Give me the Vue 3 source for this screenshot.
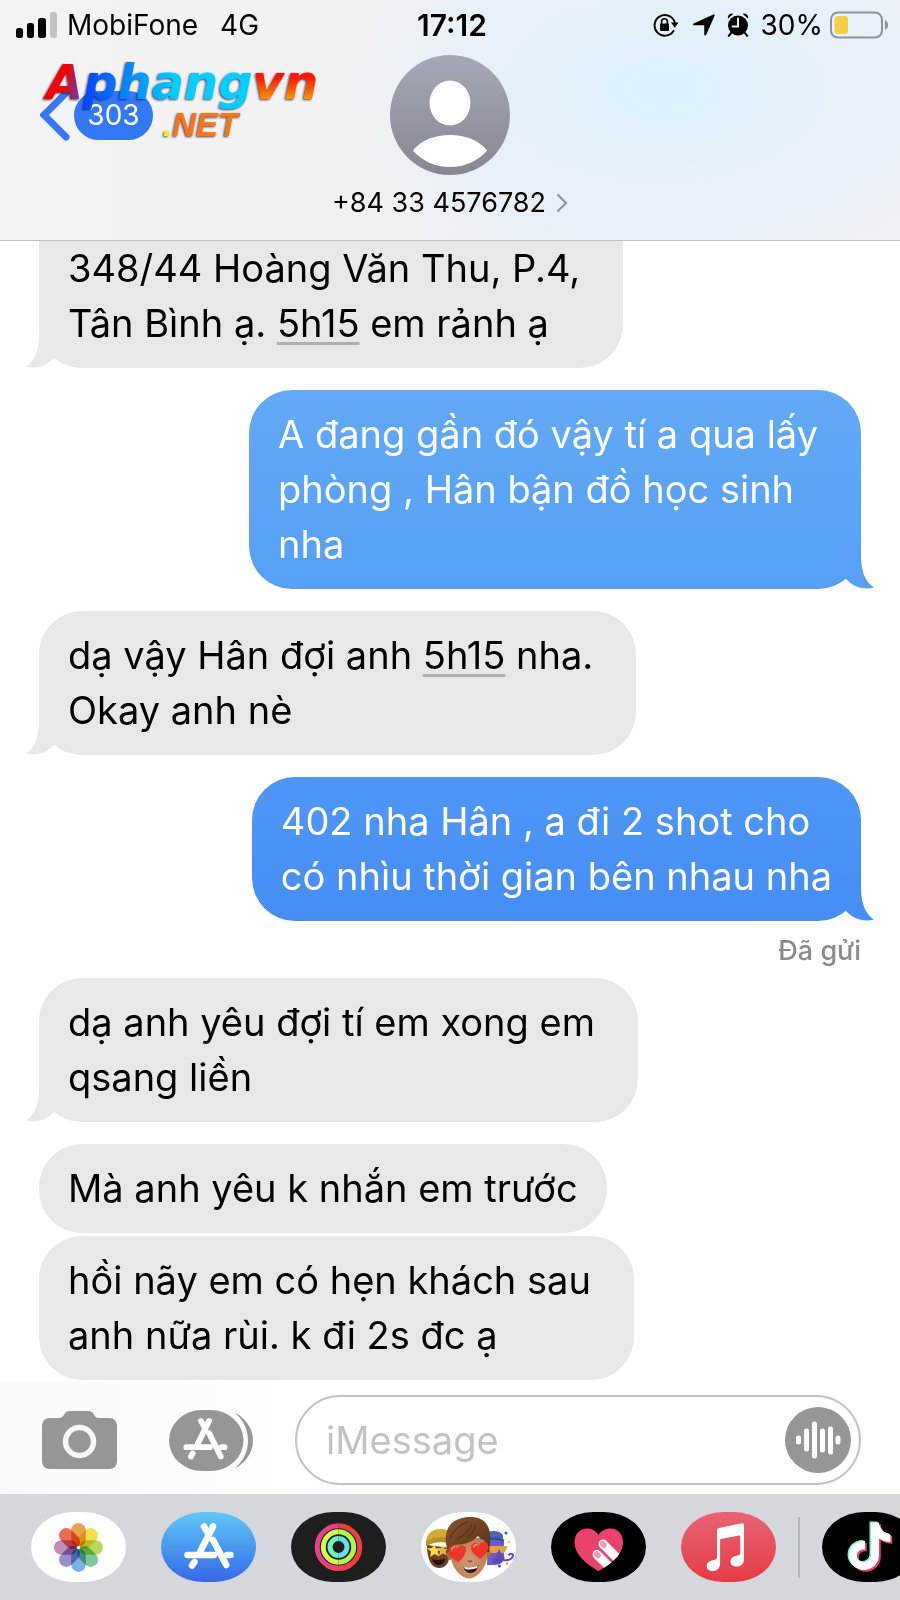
<template>
  <div class="chat-screen">
    <header class="header">
      <div class="status-bar">
        <div class="status-left">
          <svg class="signal" viewBox="0 0 42 26" aria-hidden="true">
            <rect x="0" y="16" width="7" height="10" rx="2.5" />
            <rect x="11" y="11" width="7" height="15" rx="2.5" />
            <rect x="22" y="6" width="8" height="20" rx="2.5" />
            <rect x="34" y="0" width="7" height="26" rx="2.5" fill="#c2c3c4" />
          </svg>
          <span>MobiFone</span>
          <span class="network">4G</span>
        </div>
        <div class="clock">17:12</div>
        <div class="status-right">
          <svg class="lock" viewBox="0 0 26 24" aria-hidden="true">
            <path d="M20.5 18A10.3 10.3 0 1 1 21.6 9" fill="none" stroke="#000" stroke-width="2" stroke-linecap="round" />
            <path d="M18 9.5h7.5l-3.7 5.3z" />
            <rect x="7" y="10.5" width="9" height="7.5" rx="1" />
            <path d="M8.6 11V8.600a2.900 2.900 0 0 1 5.800 0V11" fill="none" stroke="#000" stroke-width="1.600" />
          </svg>
          <svg class="arrow" viewBox="0 0 22 22" aria-hidden="true">
            <path d="M.7 9.600 20.300.4c1-.4 1.700.3 1.300 1.300L13.200 20.800c-.5 1.200-1.900 1-1.900-.3l-.1-9.200-9.900-.1C-.1 11.200-.3 10.100.7 9.600z" />
          </svg>
          <svg class="alarm" viewBox="0 0 22 24" aria-hidden="true">
            <circle cx="11" cy="12.500" r="10" />
            <path d="M1 5.500A4 4 0 0 1 6.500.8zM21 5.500A4 4 0 0 0 15.500.8z" />
            <path d="M4.500 19.500 1.800 22.800M17.500 19.500l2.700 3.300" stroke="#000" stroke-width="2" stroke-linecap="round" />
            <path d="M11 5.500v8H5.500" fill="none" stroke="#eaf3fa" stroke-width="2" stroke-linecap="round" />
          </svg>
          <span class="percent">30%</span>
          <svg class="battery" viewBox="0 0 58 28" aria-hidden="true">
            <rect x="1" y="1.500" width="51" height="25" rx="7" fill="none" stroke="#8d9398" stroke-width="2" />
            <rect x="4.500" y="5" width="13.500" height="18" rx="3.500" fill="#f7cd46" />
            <path d="M55 9c4 2 4 8 0 10z" fill="#8d9398" />
          </svg>
        </div>
      </div>

      <div class="nav">
        <button class="back" type="button" aria-label="Quay lại">
          <svg class="back-arrow" viewBox="0 0 30 52" aria-hidden="true">
            <path d="M26 4 4 26l22 22" fill="none" stroke="#3478f6" stroke-width="7" stroke-linecap="round" />
          </svg>
          <span class="unread">303</span>
        </button>
        <button class="contact" type="button">
          <svg class="avatar" viewBox="0 0 120 120" aria-hidden="true">
            <defs>
              <linearGradient id="avatarFill" x1="0" y1="0" x2="0" y2="1">
                <stop offset="0" stop-color="#a5a9b7" />
                <stop offset="1" stop-color="#858892" />
              </linearGradient>
            </defs>
            <circle cx="60" cy="60" r="60" fill="url(#avatarFill)" />
            <ellipse cx="60" cy="48" rx="20.500" ry="22.500" fill="#fff" />
            <path d="M23 95.500C31 85 45 80 60 80s29 5 37 15.500C88 106 75 112 60 112s-28-6-37-16.500z" fill="#fff" />
          </svg>
          <span class="phone">
            +84 33 4576782
            <svg class="chevron" viewBox="0 0 12 20" aria-hidden="true">
              <path d="m1.500 1.500 8.500 8.500-8.500 8.500" fill="none" stroke="#8e9298" stroke-width="2" />
            </svg>
          </span>
        </button>
      </div>

      <svg class="watermark" viewBox="0 -10 300 100" role="img" aria-label="Aphangvn .NET">
        <defs>
          <linearGradient id="wmA" gradientUnits="userSpaceOnUse" x1="10" y1="0" x2="48" y2="6">
            <stop offset="0.600" stop-color="#f80000" />
            <stop offset="1" stop-color="#6b3aa0" />
          </linearGradient>
          <linearGradient id="wmPhang" gradientUnits="userSpaceOnUse" x1="44" y1="0" x2="140" y2="0">
            <stop offset="0" stop-color="#0a3cff" />
            <stop offset="1" stop-color="#00cfff" />
          </linearGradient>
          <linearGradient id="wmVn" gradientUnits="userSpaceOnUse" x1="0" y1="14" x2="0" y2="41">
            <stop offset="0.200" stop-color="#ff1500" />
            <stop offset="1" stop-color="#ff9500" />
          </linearGradient>
        </defs>
        <text class="wm-main" x="11" y="41"><tspan fill="url(#wmA)">A</tspan><tspan fill="url(#wmPhang)">phang</tspan><tspan fill="url(#wmVn)">vn</tspan></text>
        <text class="wm-net" x="128" y="78"><tspan fill="#ffee00">.</tspan><tspan fill="#ff7410">NET</tspan></text>
      </svg>
    </header>

    <main class="messages">
      <template v-for="msg in messages" :key="msg.id">
        <div
          class="bubble"
          :class="[msg.from, msg.tone, { loose: msg.loose, close: msg.close }]"
        >
          <svg v-if="msg.tail" class="tail" viewBox="0 0 42 46" aria-hidden="true">
            <path d="M13 0v12c0 16-4 27-13 32.500 11 3 21-1 28-8.500L40 24 30 0z" fill="currentColor" />
          </svg>
          <p class="text">
            <template v-for="(part, i) in msg.parts" :key="i">
              <a v-if="part.time" href="#">{{ part.time }}</a>
              <template v-else>{{ part }}</template>
            </template>
          </p>
        </div>
        <div v-if="msg.status" class="delivery">{{ msg.status }}</div>
      </template>
    </main>

    <form class="composer" @submit.prevent>
      <button class="icon-button camera" type="button" aria-label="Máy ảnh">
        <svg viewBox="0 0 75 58" aria-hidden="true">
          <path d="M8 7h9c3 0 4-1.500 5.500-4C24 .7 25.500 0 28 0h18c2.500 0 4 .7 5.500 3 1.500 2.500 2.500 4 5.500 4h10c5 0 8 3 8 8v35c0 5-3 8-8 8H8c-5 0-8-3-8-8V15c0-5 3-8 8-8z" fill="#969696" />
          <circle cx="37.500" cy="30.500" r="14" fill="none" stroke="#f8f8f8" stroke-width="5.500" />
        </svg>
      </button>
      <button class="icon-button apps" type="button" aria-label="Ứng dụng">
        <svg viewBox="0 0 84 61" aria-hidden="true">
          <rect width="74.500" height="61" rx="33" ry="30.500" fill="#969696" />
          <path d="M66 2.500C76 8 84 18 84 30.500S76 53 66 58.500C74 51 79 42 79 30.500S74 10 66 2.500z" fill="#969696" />
          <g transform="translate(-6.300 -1.100) scale(.89)" fill="none" stroke="#fff" stroke-width="6.500" stroke-linecap="round">
            <path d="M52 13.500 39 40M43 13.500l4 7M52 27l13.300 26.500M66 43h3.500M33.700 50l-2 3.500" />
            <path d="M26.500 43H53" />
          </g>
        </svg>
      </button>
      <div class="field">
        <input v-model="draft" type="text" placeholder="iMessage" aria-label="iMessage" />
        <button class="voice" type="button" aria-label="Ghi âm">
          <svg viewBox="0 0 66 66" aria-hidden="true">
            <path
              d="M13.500 31v4M21.500 24v18M29.500 17v32M37.500 24v19M45.500 22v23M53 31v4"
              fill="none"
              stroke="#fff"
              stroke-width="5"
              stroke-linecap="round"
            />
          </svg>
        </button>
      </div>
    </form>

    <nav class="tray">
      <button class="app photos" type="button" aria-label="Ảnh">
        <svg viewBox="0 0 95 70" aria-hidden="true">
          <rect
            v-for="petal in petals"
            :key="petal.angle"
            class="petal"
            x="40.200"
            y="11"
            width="14.600"
            height="23.500"
            rx="7.300"
            :fill="petal.color"
            :transform="`rotate(${petal.angle} 47.5 35.500)`"
          />
          <circle cx="47.500" cy="35.500" r="1.500" fill="#fff" />
        </svg>
      </button>

      <button class="app store" type="button" aria-label="App Store">
        <svg viewBox="0 0 95 70" aria-hidden="true">
          <g fill="none" stroke="#fff" stroke-width="6.500" stroke-linecap="round">
            <path d="M52 14.500 39 40M43 14.500l4 7M52 28l13.300 25M66 43h3.500M33.500 50l-2.500 3.500" />
            <path d="M26.500 43H53" />
          </g>
        </svg>
      </button>

      <button class="app activity" type="button" aria-label="Hoạt động">
        <svg viewBox="0 0 95 70" aria-hidden="true">
          <g fill="none" stroke-width="5">
            <path d="M47.500 13.700a21.300 21.300 0 0 0 0 42.600" stroke="#ea3f8f" />
            <path d="M47.500 13.700a21.300 21.300 0 0 1 0 42.600" stroke="#ee4036" />
            <path d="M47.500 56.300a21.300 21.300 0 0 1-12-3.500" stroke="#f03f6a" />
            <path d="M47.500 56.300a21.300 21.300 0 0 0 12-3.500" stroke="#f03f50" />
            <path d="M47.500 19.800a15.200 15.200 0 0 0 0 30.400" stroke="#d3f94d" />
            <path d="M47.500 19.800a15.200 15.200 0 0 1 0 30.400" stroke="#a9fa4f" />
            <path d="M47.500 26.500a8.500 8.500 0 0 0 0 17" stroke="#6df5bd" />
            <path d="M47.500 26.500a8.500 8.500 0 0 1 0 17" stroke="#67dff3" />
          </g>
        </svg>
      </button>

      <button class="app memoji" type="button" aria-label="Memoji">
        <svg viewBox="0 0 95 70" aria-hidden="true">
          <defs>
            <linearGradient id="hairFill" x1="0" y1="0" x2="1" y2="1">
              <stop offset="0" stop-color="#8a552e" />
              <stop offset="1" stop-color="#573015" />
            </linearGradient>
            <radialGradient id="skinFill" cx="0.500" cy="0.550" r="0.600">
              <stop offset="0" stop-color="#d49c72" />
              <stop offset="1" stop-color="#b57c54" />
            </radialGradient>
          </defs>
          <path d="M6 33c0 14 4 23 12 23s11-6 11-20z" fill="#6b3f23" />
          <path d="M5 33C4 21 12 16 22 17c6 1 8 4 8 14-8-2-17-2-25 2z" fill="#d2ab32" />
          <path d="M5 29c7-4 16-5 25-2v5c-9-3-17-2-25 2z" fill="#b8922a" />
          <path d="m13 32 2 4.500 5-.5-3.500 3.500 2 5-5-2.500-4.500 3 1-5.500-4-3 5-.5z" fill="#ffd94a" />
          <path d="m22 33 1.500 4 4-.5-3 3 1.500 4-4-2-4 2.500 1-4.500-3-3 4-.3z" fill="#e6b93c" />
          <path d="M11 47c5 1.500 9 1 13-.5-.5 4-3 6.500-6 6.500s-6-2-7-6z" fill="#2a120c" />
          <path d="M67 27h16v18c0 5-4 8-9 8h-8z" fill="#7158c8" />
          <path d="M67 20c6-2 12-1 15 3v6c-5-2-10-2-15-1z" fill="#3b68c0" />
          <path d="M68 27c6-1 11 0 14 2" stroke="#294c98" stroke-width="2" fill="none" />
          <path d="M67 34h19c0 5-3 8-6 7l-2-2-3 2h-8z" fill="#e2a33a" />
          <path d="m78 37 3 6 3 3-4 5-6 1-4-3 5-4z" fill="#6246b8" />
          <path d="M81 48c6 1 10-1 11-4 .5-2.500-3.500-3-4-.5" fill="none" stroke="#6246b8" stroke-width="2" />
          <circle cx="75.500" cy="23" r="1.200" fill="#e33b3b" />
          <circle cx="85" cy="21" r="1.500" fill="#2c59d8" />
          <circle cx="88" cy="30" r="1.500" fill="#f3e23a" />
          <circle cx="78.500" cy="54" r="1.500" fill="#2c59d8" />
          <circle cx="86" cy="51.500" r="1.300" fill="#f09a2a" />
          <ellipse cx="29" cy="43" rx="3" ry="5" fill="#a76d45" />
          <ellipse cx="66.500" cy="42" rx="3" ry="5" fill="#a76d45" />
          <path d="M30 26h36v18c0 11-10 22.500-18 22.500S30 55 30 44z" fill="url(#skinFill)" />
          <path d="M27 40C22 25 25 11 38 7c11-4 24-2 28 6 5 7 3 18 2 27h-2c0-5-1-9-3-12-3-1-5-2-6-4-5 6-15 9-24 9-3 2-4 4-4 7z" fill="url(#hairFill)" />
          <path d="M29 26c4-8 10-14 18-16M36 27c7-3 12-9 15-15M46 25c5-2 8-8 9-13" stroke="#4f2b13" stroke-width="1" fill="none" />
          <path d="M37.500 50.500C32 47 27 43.500 27.500 38c.5-5 7-6 8.500-1 2-5 9-5 9 .500 0 5-4 9-7.500 13z" fill="#ee3528" />
          <path d="M59.500 47C55 44 50 40.500 50 35.500c0-5 6-6.500 8-2 2-5 9-4.500 9.500.500.500 5-4 9-8 13z" fill="#ee3528" />
          <path d="M30.500 38c0-2 1.500-3 3-2.500M53 35c0-2 1.500-2.500 3-2" stroke="#ff8d7c" stroke-width="1.500" fill="none" stroke-linecap="round" />
          <path d="M47 48.500c1 1.500 3 1.500 4 0" stroke="#87502f" stroke-width="1.500" fill="none" />
          <path d="M42.500 55c6 1 11 0 15-2-1 5-4 8-8 8-3 0-6-2-7-6z" fill="#401311" />
          <path d="M43 55c6 1 10 0 14-1.500l-1 2.500c-4 1.500-8 2-12 1z" fill="#fff" />
        </svg>
      </button>

      <button class="app touch" type="button" aria-label="Digital Touch">
        <svg viewBox="0 0 95 70" aria-hidden="true">
          <defs>
            <clipPath id="heartClip">
              <path d="M47.500 59C35 52 23.500 42.500 23.500 30c0-8 5.500-13.500 12.500-13.500 5 0 9 2.500 11.500 6.500 2.500-4 6.500-6.500 12-6.500C66.500 16.500 72 22 72 30c0 12.500-11.500 22-24.500 29z" />
            </clipPath>
          </defs>
          <g clip-path="url(#heartClip)">
            <rect width="95" height="70" fill="#ea426b" />
            <path d="m52 32 20 20M46 42.500l20 20" stroke="#fff" stroke-width="9" stroke-linecap="round" />
            <path d="m51.500 31.500 1.500 1.500M45.500 42l1.500 1.500" stroke="#f29ab0" stroke-width="5.500" stroke-linecap="round" />
          </g>
        </svg>
      </button>

      <button class="app music" type="button" aria-label="Nhạc">
        <svg viewBox="0 0 95 70" aria-hidden="true">
          <path
            d="M36 18.500c0-1.500.7-2.300 2-2.600l23-4.600c1.300-.3 2 .3 2 1.700v34c0 5-3 7.500-7.500 7.500-3.500 0-6-2-6-5s2-5 6-5.800c3-.6 3.800-1 3.800-3V24.300c0-.8-.5-1-1.200-.9l-18 3.700c-.7.200-1 .5-1 1.200V51c0 5.500-3 8-7.500 8-3.500 0-6-2-6-5s2.200-5 6-5.800c3-.6 4.400-1 4.400-3.200z"
            fill="#fff"
          />
        </svg>
      </button>

      <div class="divider"></div>

      <button class="app tiktok" type="button" aria-label="TikTok">
        <svg viewBox="0 0 95 70" aria-hidden="true">
          <defs>
            <path id="tiktokNote" d="M49 10.500h8c.5 6 5 11 11.500 12v7.500c-4.500 0-8.300-1.300-11.500-3.800V43c0 8.500-7 15-15 15s-15-6.500-15-14.500S34 28.500 43 29v8.500c-4.500-.7-8 2-8 6s3.200 6.500 7 6.500 7-3 7-7z" />
          </defs>
          <use href="#tiktokNote" x="-1.500" y="-1" fill="#74f0ec" />
          <use href="#tiktokNote" x="1.800" y="1.800" fill="#ea3f5c" />
          <use href="#tiktokNote" fill="#fff" />
        </svg>
      </button>
    </nav>
  </div>
</template>

<script setup>
import { ref } from 'vue'

const draft = ref('')

const messages = [
  {
    id: 1,
    from: 'them',
    tail: true,
    loose: true,
    parts: ['348/44 Hoàng Văn Thu, P.4,\nTân Bình ạ. ', { time: '5h15' }, ' em rảnh ạ']
  },
  {
    id: 2,
    from: 'me',
    tone: 'light',
    tail: true,
    loose: true,
    parts: ['A đang gần đó vậy tí a qua lấy\nphòng , Hân bận đồ học sinh\nnha']
  },
  {
    id: 3,
    from: 'them',
    tail: true,
    loose: true,
    parts: ['dạ vậy Hân đợi anh ', { time: '5h15' }, ' nha.\nOkay anh nè']
  },
  {
    id: 4,
    from: 'me',
    tone: 'deep',
    tail: true,
    parts: ['402 nha Hân , a đi 2 shot cho\ncó nhìu thời gian bên nhau nha'],
    status: 'Đã gửi'
  },
  {
    id: 5,
    from: 'them',
    tail: true,
    loose: true,
    parts: ['dạ anh yêu đợi tí em xong em\nqsang liền']
  },
  { id: 6, from: 'them', parts: ['Mà anh yêu k nhắn em trước'] },
  {
    id: 7,
    from: 'them',
    loose: true,
    close: true,
    parts: ['hồi nãy em có hẹn khách sau\nanh nữa rùi. k đi 2s đc ạ']
  }
]

const petals = [
  { angle: 0, color: '#f0a04b' },
  { angle: 45, color: '#f3e04a' },
  { angle: 90, color: '#bcd75f' },
  { angle: 135, color: '#7fc795' },
  { angle: 180, color: '#78b4e2' },
  { angle: 225, color: '#9d8fc9' },
  { angle: 270, color: '#c58bb8' },
  { angle: 315, color: '#ea6a5c' }
]
</script>

<style>
body {
  margin: 0;
  background: #fff;
}
</style>

<style scoped>
.chat-screen {
  min-height: 100vh;
  display: flex;
  flex-direction: column;
  overflow: hidden;
  background: #fff;
  color: #000;
  font-family: Inter, "Liberation Sans", sans-serif;
}

button {
  padding: 0;
  border: none;
  background: none;
  color: inherit;
  font: inherit;
  cursor: pointer;
}

svg {
  display: block;
}

/* header */
.header {
  position: relative;
  z-index: 1;
  height: 240px;
  border-bottom: 1px solid #bfc0c2;
  background:
    radial-gradient(ellipse 340px 190px at 74% 90px, #def0fc 0%, rgba(228, 241, 251, 0.8) 50%, rgba(238, 241, 245, 0) 100%),
    linear-gradient(90deg, #f3f3f3 0%, #f2f2f3 40%, #eaf0f5 60%, #eef1f5 100%);
}

.status-bar {
  height: 50px;
  padding: 0 12px 0 16px;
  display: grid;
  grid-template-columns: 1fr auto 1fr;
  align-items: center;
  font-size: 28px;
}

.status-left,
.status-right {
  display: flex;
  align-items: center;
}

.status-right {
  justify-content: flex-end;
}

.signal {
  width: 42px;
  height: 26px;
  margin-right: 9px;
}

.network {
  margin-left: 22px;
}

.clock {
  font-size: 30px;
  font-weight: 600;
}

.lock {
  width: 26px;
  height: 24px;
  margin-right: 14px;
}

.arrow {
  width: 22px;
  height: 22px;
  margin-right: 12px;
}

.alarm {
  width: 22px;
  height: 24px;
  margin-right: 12px;
}

.battery {
  width: 58px;
  height: 28px;
  margin-left: 7px;
}

.nav {
  padding: 5px 40px 0;
  display: grid;
  grid-template-columns: 1fr auto 1fr;
  align-items: start;
}

.back {
  margin-top: 34px;
  display: flex;
  align-items: center;
  gap: 4px;
}

.back-arrow {
  width: 30px;
  height: 52px;
}

.unread {
  width: 79px;
  line-height: 49px;
  border-radius: 25px;
  background: #3478f6;
  color: #fff;
  font-size: 28px;
}

.contact {
  display: flex;
  flex-direction: column;
  align-items: center;
}

.avatar {
  width: 120px;
  height: 120px;
}

.phone {
  margin-top: 12px;
  display: flex;
  align-items: center;
  gap: 10px;
  font-size: 27px;
  line-height: 32px;
}

.chevron {
  width: 12px;
  height: 20px;
}

.watermark {
  position: absolute;
  left: 35px;
  top: 48px;
  width: 300px;
  height: 100px;
  pointer-events: none;
  filter: drop-shadow(-1px 1px 1px rgba(20, 20, 60, 0.8));
}

.wm-main {
  font: italic bold 48px "DejaVu Sans", sans-serif;
}

.wm-net {
  font: italic bold 33px "Liberation Sans", sans-serif;
}

/* conversation */
.messages {
  flex: 1;
  padding: 0 39px;
  display: flex;
  flex-direction: column;
  align-items: flex-start;
}

.bubble {
  position: relative;
  margin-top: 22px;
  padding: 17px 29px;
  border-radius: 43px;
  font-size: 38px;
  line-height: 55px;
}

/* scrolled partly under the header */
.bubble:first-child {
  margin-top: -17px;
  border-top-left-radius: 0;
  border-top-right-radius: 0;
}

.bubble.loose {
  padding-right: 43px;
}

.bubble.close {
  margin-top: 3px;
}

.them {
  background: #e8e8e8;
}

.me {
  align-self: flex-end;
  color: #fff;
}

.light {
  background: linear-gradient(#62aaf6, #559ff5);
}

.deep {
  background: linear-gradient(#4f97f6, #468df5);
}

.tail {
  position: absolute;
  left: -13px;
  bottom: 0;
  width: 42px;
  height: 46px;
  color: #e8e8e8;
}

.me .tail {
  left: auto;
  right: -13px;
  transform: scaleX(-1);
}

.light .tail {
  color: #57a0f5;
}

.deep .tail {
  color: #488ff5;
}

.text {
  position: relative;
  margin: 0;
  white-space: pre-line;
}

.text a {
  color: inherit;
  text-decoration: underline #b0b0b2 3px;
  text-decoration-skip-ink: none;
  text-underline-offset: 5px;
}

.delivery {
  align-self: flex-end;
  margin: 13px 0 -11px;
  color: #8b8b8e;
  font-size: 27px;
  font-weight: 500;
  line-height: 33px;
}

/* composer */
.composer {
  padding: 14px 39px 9px 42px;
  display: flex;
  align-items: center;
  background: linear-gradient(90deg, #fafafa, #fff 45%);
}

.icon-button {
  flex: none;
}

.camera {
  width: 75px;
  height: 58px;
}

.apps {
  width: 84px;
  height: 61px;
  margin: 0 42px 0 52px;
}

.field {
  flex: 1;
  min-width: 0;
  height: 86px;
  padding: 0 8px 0 29px;
  display: flex;
  align-items: center;
  border: 2px solid #c3c3c4;
  border-radius: 45px;
  background: #fff;
}

.field input {
  flex: 1;
  min-width: 0;
  padding: 0;
  border: none;
  outline: none;
  background: none;
  font: inherit;
  font-size: 38px;
}

.field input::placeholder {
  color: #c3c3c5;
  opacity: 1;
}

.voice {
  flex: none;
  width: 66px;
  height: 66px;
  border-radius: 50%;
  background: #969696;
}

/* app tray */
.tray {
  height: 106px;
  padding-left: 31px;
  display: flex;
  align-items: center;
  gap: 35px;
  background: #d5d7dd;
}

.app {
  flex: none;
  width: 95px;
  height: 70px;
  overflow: hidden;
  border-radius: 42px / 35px;
}

.photos,
.memoji {
  background: #fff;
}

.petal {
  mix-blend-mode: multiply;
}

.store {
  background: linear-gradient(#5fc8f7, #3468e8);
}

.activity {
  background: #1e1e1e;
}

.touch,
.tiktok {
  background: #000;
}

.music {
  background: linear-gradient(#e86475, #e63b43);
}

.divider {
  flex: none;
  width: 2px;
  height: 61px;
  margin: 0 -13px;
  background: #b4b6bb;
}
</style>
